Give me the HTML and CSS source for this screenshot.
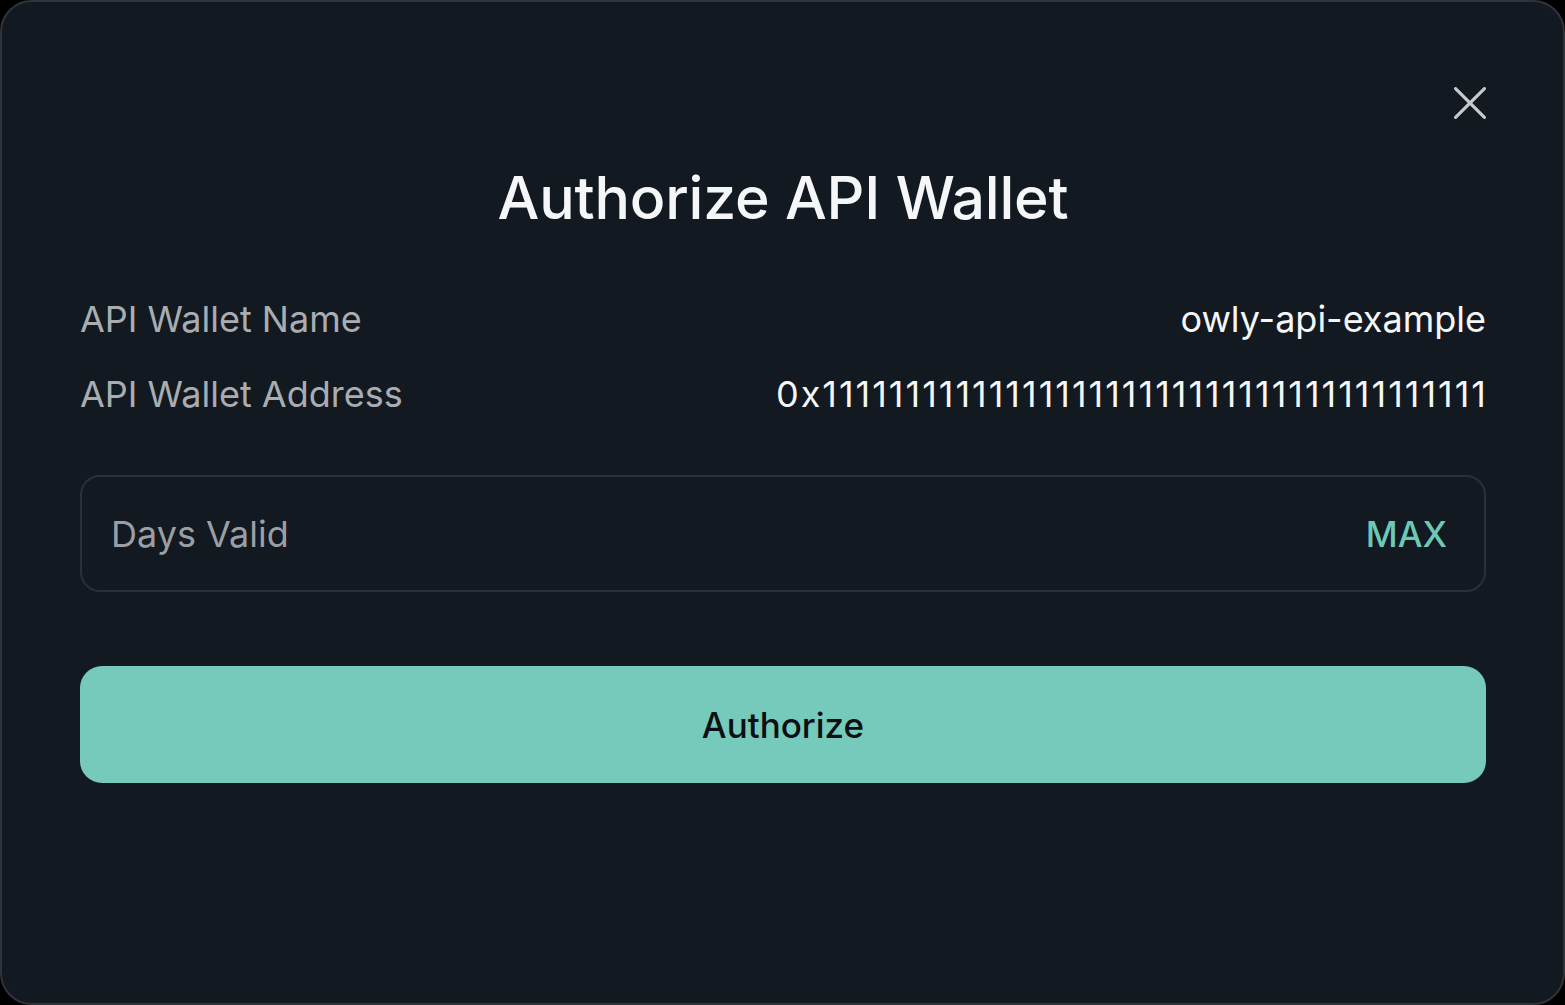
FILE: index.html
```html
<!DOCTYPE html>
<html lang="en">
<head>
    <meta charset="UTF-8">
    <meta name="viewport" content="width=device-width, initial-scale=1.0">
    <title>Authorize API Wallet</title>
    <link rel="stylesheet" href="styles.css">
</head>
<body>
    <div class="modal">
        <div class="modal-top">
            <button class="close" aria-label="Close">
                <svg width="32" height="32" viewBox="0 0 32 32" fill="none" stroke="currentColor" stroke-width="3.2" stroke-linecap="round">
                    <path d="M1.6 1.6 L30.4 30.4 M30.4 1.6 L1.6 30.4"/>
                </svg>
            </button>
        </div>
        <h1 class="title">Authorize API Wallet</h1>

        <div class="info">
            <div class="row">
                <span class="label">API Wallet Name</span>
                <span class="value">owly-api-example</span>
            </div>
            <div class="row">
                <span class="label">API Wallet Address</span>
                <span class="value address">0x1111111111111111111111111111111111111111</span>
            </div>
        </div>

        <div class="field">
            <input type="text" class="days" placeholder="Days Valid">
            <button class="max">MAX</button>
        </div>

        <button class="authorize">Authorize</button>
    </div>
</body>
</html>
```

FILE: styles.css
```css
html, body {
    margin: 0;
    height: 100%;
    background: #000;
}
body {
    font-family: Inter, "Noto Sans", sans-serif;
}
.modal {
    box-sizing: border-box;
    height: 100vh;
    background: #121920;
    border: 2px solid #2e3439;
    border-radius: 32px;
    padding: 85px 77px 0 78px;
    display: flex;
    flex-direction: column;
}
.modal-top {
    display: flex;
    justify-content: flex-end;
    height: 32px;
}
.close {
    background: none;
    border: none;
    padding: 0;
    color: #c7c9cc;
    cursor: pointer;
    width: 32px;
    height: 32px;
}
.close svg {
    display: block;
}
.title {
    margin: 43px 0 0;
    text-align: center;
    font-size: 59px;
    font-weight: 500;
    color: #f5f6f7;
    line-height: 72px;
    letter-spacing: -0.2px;
}
.info {
    margin-top: 65px;
    display: flex;
    flex-direction: column;
    gap: 35px;
}
.row {
    display: flex;
    justify-content: space-between;
    align-items: center;
    font-size: 36px;
    line-height: 40px;
}
.label {
    color: #a9adb2;
}
.value {
    color: #f5f6f7;
}
.address {
    letter-spacing: 2px;
    margin-right: -2px;
}
.field {
    margin-top: 61px;
    height: 117px;
    box-sizing: border-box;
    border: 2px solid #2a3036;
    border-radius: 20px;
    display: flex;
    align-items: center;
    padding: 0 37px 0 29px;
}
.days {
    flex: 1;
    background: none;
    border: none;
    outline: none;
    padding: 0;
    font-family: inherit;
    font-size: 36px;
    color: #f5f6f7;
}
.days::placeholder {
    color: #9b9fa4;
}
.max {
    background: none;
    border: none;
    padding: 0;
    font-family: inherit;
    font-size: 35px;
    font-weight: 500;
    color: #6dc8b6;
    cursor: pointer;
}
.authorize {
    margin-top: 74px;
    height: 117px;
    border: none;
    border-radius: 22px;
    background: #76cabb;
    color: #0c1013;
    font-family: inherit;
    font-size: 35px;
    font-weight: 500;
    cursor: pointer;
}
```
